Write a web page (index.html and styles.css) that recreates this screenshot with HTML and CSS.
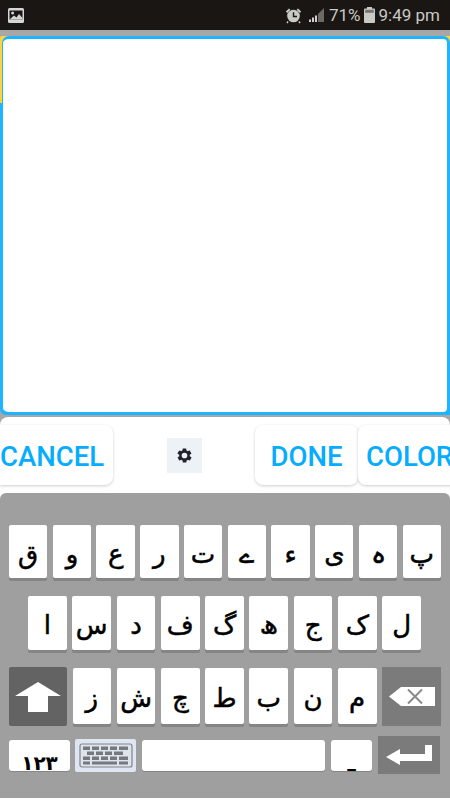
FILE: index.html
```html
<!DOCTYPE html>
<html lang="ur">
<head>
  <meta charset="UTF-8" />
  <meta name="viewport" content="width=device-width, initial-scale=1.0"/>
  <title>Urdu Keyboard</title>
  <link rel="stylesheet" href="styles.css">
</head>
<body>

  <div class="statusbar">
    <svg class="st-pic" width="16" height="15" viewBox="0 0 16 15">
      <rect x="0" y="0" width="16" height="15" rx="1.5" fill="#d6d6d4"/>
      <rect x="1.5" y="2.5" width="13" height="9" fill="#1a1614"/>
      <circle cx="4.6" cy="5" r="1.5" fill="#d6d6d4"/>
      <path d="M1.5 11.5 L6 7.5 L8.5 9.5 L11 6 L14.5 10 V11.5 Z" fill="#d6d6d4"/>
    </svg>
    <div class="st-right">
      <svg width="17" height="17" viewBox="0 0 17 17">
        <circle cx="8.5" cy="9" r="6.3" fill="#c9c9c6"/>
        <path d="M0.8 4.6 L4 1.4 L5.4 2.8 L2.2 6 Z M16.2 4.6 L13 1.4 L11.6 2.8 L14.8 6 Z" fill="#c9c9c6"/>
        <path d="M3 14.5 L2 16 M14 14.5 L15 16" stroke="#c9c9c6" stroke-width="1.5"/>
        <path d="M8.5 5.2 V9.5 H12" fill="none" stroke="#1a1614" stroke-width="1.4"/>
      </svg>
      <svg class="st-signal" width="16" height="16" viewBox="0 0 16 16">
        <path d="M15 1 V15 H9 V7 Z" fill="#6a6966"/>
        <rect x="0" y="12.5" width="2" height="2.5" fill="#d0d0ce"/>
        <rect x="3" y="10.5" width="2" height="4.5" fill="#d0d0ce"/>
        <rect x="6" y="8.5" width="2" height="6.5" fill="#d0d0ce"/>
      </svg>
      <span class="st-text st-pct">71%</span>
      <svg class="st-batt" width="11" height="16" viewBox="0 0 11 16">
        <rect x="3" y="0" width="5" height="2" fill="#c9c9c6"/>
        <rect x="0" y="1.5" width="11" height="14.5" rx="1" fill="#c9c9c6"/>
        <rect x="1.2" y="2.8" width="8.6" height="3" fill="#77756f"/>
      </svg>
      <span class="st-text">9:49 pm</span>
    </div>
  </div>

  <div class="editor-wrap">
    <div class="editor"></div>
  </div>

  <div class="actions">
    <button class="act act-cancel">CANCEL</button>
    <div class="gear-slot">
      <div class="gear">
        <svg width="17" height="17" viewBox="0 0 24 24">
          <path fill="#20242a" d="M19.4 13a7.6 7.6 0 0 0 0-2l2.1-1.6a.5.5 0 0 0 .1-.6l-2-3.5a.5.5 0 0 0-.6-.2l-2.5 1a7.3 7.3 0 0 0-1.7-1l-.4-2.7a.5.5 0 0 0-.5-.4h-4a.5.5 0 0 0-.5.4l-.4 2.7a7.3 7.3 0 0 0-1.7 1l-2.5-1a.5.5 0 0 0-.6.2l-2 3.5a.5.5 0 0 0 .1.6L4.6 11a7.6 7.6 0 0 0 0 2l-2.1 1.6a.5.5 0 0 0-.1.6l2 3.5c.1.2.4.3.6.2l2.5-1c.5.4 1.1.7 1.7 1l.4 2.7c0 .2.3.4.5.4h4c.2 0 .5-.2.5-.4l.4-2.7c.6-.3 1.2-.6 1.7-1l2.5 1c.2.1.5 0 .6-.2l2-3.5a.5.5 0 0 0-.1-.6zM12 16a4 4 0 1 1 0-8 4 4 0 0 1 0 8z"/>
        </svg>
      </div>
    </div>
    <button class="act act-done">DONE</button>
    <button class="act act-color">COLOR</button>
  </div>

  <div class="keyboard">
    <div class="row row-1">
      <div class="key">ق</div><div class="key">و</div><div class="key">ع</div><div class="key">ر</div><div class="key">ت</div>
      <div class="key">ے</div><div class="key">ء</div><div class="key">ی</div><div class="key">ہ</div><div class="key">پ</div>
    </div>
    <div class="row row-2">
      <div class="key">ا</div><div class="key">س</div><div class="key">د</div><div class="key">ف</div><div class="key">گ</div>
      <div class="key">ھ</div><div class="key">ج</div><div class="key">ک</div><div class="key">ل</div>
    </div>
    <div class="row row-3">
      <div class="fn fn-shift">
        <svg width="46" height="32" viewBox="0 0 46 32">
          <path d="M23 1 L46 15 H33 V31 H13 V15 H0 Z" fill="#fff"/>
        </svg>
      </div>
      <div class="key">ز</div><div class="key">ش</div><div class="key">چ</div><div class="key">ط</div><div class="key">ب</div><div class="key">ن</div><div class="key">م</div>
      <div class="fn fn-del">
        <svg width="46" height="20" viewBox="0 0 46 20">
          <path d="M12 0 H46 V19 H12 L0 9.5 Z" fill="#fff"/>
          <path d="M19 2.5 L33 16.5 M33 2.5 L19 16.5" stroke="#8a8a8a" stroke-width="2"/>
        </svg>
      </div>
    </div>
    <div class="row row-4">
      <div class="bkey bkey-num">۱۲۳</div>
      <div class="bkey-kbd">
        <svg width="54" height="25" viewBox="0 0 54 25">
          <rect x="1" y="1" width="52" height="23" rx="2" fill="#dfe3ea" stroke="#7f838a" stroke-width="1.2"/>
          <g fill="#75787e">
            <rect x="4" y="3.5" width="7" height="3.5"/><rect x="13" y="3.5" width="7" height="3.5"/><rect x="22" y="3.5" width="7" height="3.5"/><rect x="31" y="3.5" width="7" height="3.5"/><rect x="40" y="3.5" width="9" height="3.5"/>
            <rect x="8" y="8.5" width="7" height="3.5"/><rect x="17" y="8.5" width="7" height="3.5"/><rect x="26" y="8.5" width="7" height="3.5"/><rect x="35" y="8.5" width="9" height="3.5"/>
            <rect x="4" y="13.5" width="7" height="3.5"/><rect x="13" y="13.5" width="7" height="3.5"/><rect x="22" y="13.5" width="7" height="3.5"/><rect x="31" y="13.5" width="7" height="3.5"/><rect x="40" y="13.5" width="9" height="3.5"/>
            <rect x="4" y="18.5" width="7" height="3"/><rect x="13" y="18.5" width="25" height="3"/><rect x="40" y="18.5" width="9" height="3"/>
          </g>
        </svg>
      </div>
      <div class="bkey bkey-space"></div>
      <div class="bkey bkey-dot">ـ</div>
      <div class="fn fn-enter">
        <svg width="46" height="20" viewBox="0 0 46 20">
          <path d="M0 12 L14 4 V9 H39 V0 H46 V16 H14 V20 Z" fill="#fff"/>
        </svg>
      </div>
    </div>
  </div>

</body>
</html>
```

FILE: styles.css
```css
* {
  box-sizing: border-box;
}

body {
  margin: 0;
  width: 450px;
  height: 800px;
  overflow: hidden;
  background: linear-gradient(to bottom, #a7a7a7 493px, #fff 493px);
  font-family: 'Roboto', sans-serif;
}

.statusbar {
  height: 30px;
  background: #1a1614;
  display: flex;
  align-items: center;
  justify-content: space-between;
  padding: 0 10px 0 8px;
}

.st-right {
  display: flex;
  align-items: center;
}

.st-signal {
  margin-left: 7px;
}

.st-text {
  color: #c9c9c6;
  font-size: 17px;
  line-height: 30px;
}

.st-pct {
  margin-left: 4px;
}

.st-batt {
  margin: 0 4px 0 3px;
}

.editor-wrap {
  margin-top: 6px;
  height: 379px;
  background: linear-gradient(to bottom, #ffd43a 0, #ffd43a 67px, #1fb4ff 67px);
  border-radius: 2px 0 0 6px;
}

.editor {
  height: 100%;
  margin-left: 2px;
  background: #fff;
  border: 3px solid #1fb4ff;
  border-left-width: 1px;
  border-radius: 7px;
}

.actions {
  margin-top: 2px;
  height: 76px;
  background: #fff;
  border-radius: 8px 8px 0 0;
  display: flex;
  align-items: center;
  overflow: hidden;
}

.act {
  flex: none;
  height: 60px;
  padding: 3px 0 0;
  border: none;
  border-radius: 8px;
  background: #fff;
  box-shadow: 0 1px 3px rgba(0, 0, 0, 0.2);
  color: #06acff;
  font-family: 'Roboto', sans-serif;
  font-size: 27.5px;
  font-weight: 500;
}

.act-cancel {
  width: 113px;
  text-align: left;
  border-radius: 0 8px 8px 0;
}

.gear-slot {
  flex: none;
  width: 142px;
  display: flex;
  justify-content: center;
}

.gear {
  width: 35px;
  height: 35px;
  background: #edf2f6;
  display: flex;
  align-items: center;
  justify-content: center;
}

.act-done {
  width: 103px;
}

.act-color {
  width: 104px;
  padding-left: 8px;
  text-align: left;
}

.keyboard {
  height: 307px;
  background: #9f9f9f;
  border-radius: 6px 6px 0 0;
  border-bottom: 2px solid #fff;
  padding-top: 32px;
}

.row {
  display: flex;
}

.row-1 {
  gap: 5.4px;
  padding: 0 9px;
  height: 56px;
}

.row-2 {
  gap: 5.5px;
  padding: 0 29px 0 28px;
  height: 57px;
  margin-top: 15px;
}

.row-3 {
  gap: 5.5px;
  padding: 0 9px;
  height: 59px;
  margin-top: 14px;
}

.row-4 {
  align-items: center;
  gap: 5px;
  padding: 0 10px 0 9px;
  height: 38px;
  margin-top: 10px;
}

.key {
  flex: 1 1 0;
  min-width: 0;
  height: 56px;
  background: #fff;
  border-radius: 2px;
  box-shadow: 0 3px 0 #858585;
  display: flex;
  align-items: center;
  justify-content: center;
  font-family: 'DejaVu Sans', sans-serif;
  font-size: 26px;
  -webkit-text-stroke: 0.5px #000;
  color: #000;
  padding-top: 4px;
}

.row-1 .key {
  height: 53px;
}

.row-2 .key {
  height: 54px;
}

.row-3 .key {
  height: 56px;
  margin-top: 1px;
}

.fn {
  flex: none;
  display: flex;
  align-items: center;
  justify-content: center;
}

.fn-shift {
  width: 58px;
  background: #636363;
  border-radius: 2px;
}

.fn-del {
  width: 59px;
  background: #7b7b7b;
}

.fn-enter {
  width: 62px;
  height: 38px;
  background: #7b7b7b;
  margin-left: 1px;
}

.bkey {
  flex: none;
  height: 31px;
  background: #fff;
  border-radius: 3px;
  box-shadow: 0 1px 0 #858585;
  overflow: hidden;
  display: flex;
  align-items: flex-end;
  justify-content: center;
  font-family: 'DejaVu Sans', sans-serif;
  font-size: 20px;
  font-weight: bold;
  line-height: 16px;
  color: #000;
}

.bkey-num {
  width: 61px;
}

.bkey-kbd {
  flex: none;
  width: 61px;
  height: 33px;
  background: #dfe6f3;
  border-radius: 2px;
  display: flex;
  align-items: center;
  justify-content: center;
}

.bkey-space {
  width: 183px;
  margin-left: 1px;
}

.bkey-dot {
  width: 41px;
  margin-left: 1px;
  font-size: 24px;
  line-height: 14px;
}
```
